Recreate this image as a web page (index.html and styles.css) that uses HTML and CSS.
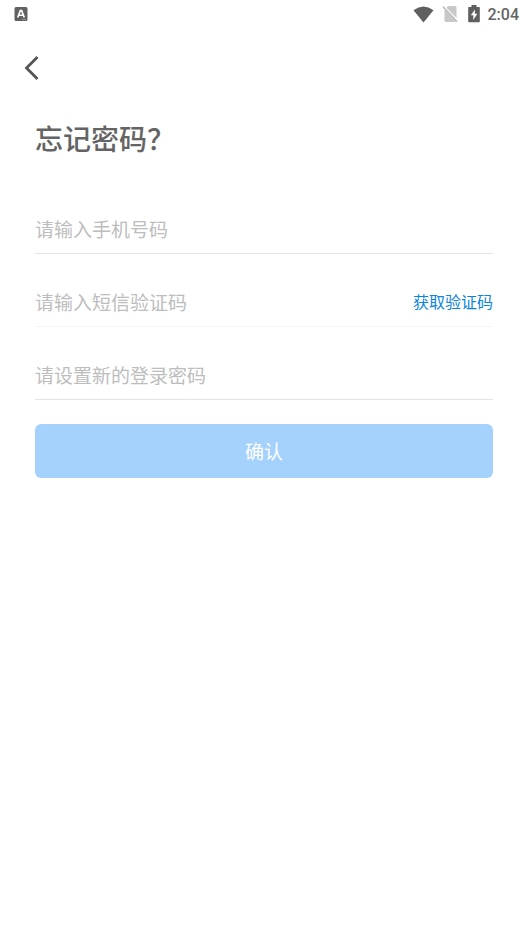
FILE: index.html
```html
<!DOCTYPE html>
<html lang="zh-CN">
<head>
<meta charset="utf-8">
<meta name="viewport" content="width=device-width, initial-scale=1">
<title>忘记密码</title>
<link rel="stylesheet" href="styles.css">
</head>
<body>
<header class="status-bar">
  <svg class="keyboard-icon" viewBox="0 0 14 14" aria-hidden="true">
    <rect width="13" height="14" x=".5" rx="1.5" fill="#626262"/>
    <path d="M3.700 10.500 6.300 3.600h1.400L10.300 10.500M4.700 8.300h4.600" fill="none" stroke="#fff" stroke-width="1.600"/>
    <path d="M8 12.600h4" stroke="#aaa" stroke-width=".7"/>
  </svg>
  <div class="status-group">
    <svg class="wifi-icon" viewBox="0 0 22 17" aria-hidden="true">
      <path d="M.5 4Q11-3.600 21.500 4L11 17Z" fill="#5f5f5f"/>
    </svg>
    <svg class="sim-icon" viewBox="0 0 18 18" aria-hidden="true">
      <path d="M6.200 1H13q1.500 0 1.500 1.500V13L4.300 2.700ZM2.500 4.200 14 16.400q-.4.600-1 .6H4q-1.500 0-1.500-1.500Z" fill="#c8c8c8"/>
      <path d="M.8 1.500 15.200 16.700" stroke="#b9b9b9" stroke-width="1.400"/>
    </svg>
    <svg class="battery-icon" viewBox="0 0 12 18" aria-hidden="true">
      <path d="M3.500 0h5v2H11q.8 0 .8.800v13.700q0 .8-.8.800H1q-.8 0-.8-.8V2.800Q.2 2 1 2h2.500Z" fill="#5f5f5f"/>
      <path d="M7 4.500 2.800 10.300h2.500V15l4-6.200H6.800Z" fill="#fff"/>
    </svg>
    <time class="clock">2:04</time>
  </div>
</header>
<nav class="nav-bar">
  <button class="back-button" type="button" aria-label="返回">
    <svg class="back-icon" viewBox="0 0 16 26" aria-hidden="true">
      <path d="M13.500 2 2.500 13l11 11" fill="none" stroke="#555" stroke-width="2.800"/>
    </svg>
  </button>
</nav>
<main class="content">
  <h1 class="title">忘记密码？</h1>
  <form class="form">
    <div class="field">
      <input class="field-input" type="tel" aria-label="手机号码" placeholder="请输入手机号码">
    </div>
    <div class="field field-light">
      <input class="field-input" type="text" aria-label="短信验证码" placeholder="请输入短信验证码">
      <button class="code-button" type="button">获取验证码</button>
    </div>
    <div class="field">
      <input class="field-input" type="password" aria-label="新的登录密码" placeholder="请设置新的登录密码">
    </div>
    <button class="submit-button" type="submit">确认</button>
  </form>
</main>
</body>
</html>
```

FILE: styles.css
```css
* {
  box-sizing: border-box;
}

body {
  margin: 0;
  background: #fff;
  color: #646464;
  font-family: "Noto Sans CJK SC", sans-serif;
}

button,
input {
  padding: 0;
  border: 0;
  background: none;
  font-family: inherit;
}

svg {
  display: block;
}

.status-bar {
  display: flex;
  align-items: center;
  justify-content: space-between;
  height: 28px;
  padding: 0 9px 0 14px;
}

.status-group {
  display: flex;
  align-items: center;
  gap: 8px;
}

.keyboard-icon {
  width: 14px;
  height: 14px;
}

.wifi-icon {
  width: 21px;
  height: 17px;
}

.sim-icon {
  width: 18px;
  height: 18px;
}

.battery-icon {
  width: 12px;
  height: 18px;
}

.clock {
  padding-top: 2px;
  font: 500 16px/20px Roboto, sans-serif;
}

.nav-bar {
  display: flex;
  padding: 16px 12px;
}

.back-button {
  display: grid;
  place-items: center;
  width: 40px;
  height: 48px;
}

.back-icon {
  width: 16px;
  height: 26px;
}

.content {
  padding: 8px 35px;
}

.title {
  margin: 0;
  font-size: 28px;
  font-weight: 500;
  line-height: 44px;
}

.form {
  display: flex;
  flex-direction: column;
  gap: 24px;
  padding-top: 45px;
}

.field {
  display: flex;
  align-items: center;
  border-bottom: 1px solid #e4e4e4;
}

.field-light {
  border-color: #f6f6f6;
}

.field-input {
  flex: 1;
  min-width: 0;
  height: 48px;
  padding-bottom: 2px;
  outline: 0;
  color: #646464;
  font-size: 19px;
  font-weight: 400;
}

.field-input::placeholder {
  color: #bdbdbd;
}

.code-button {
  padding-bottom: 2px;
  color: #0c84e0;
  font-size: 16px;
  line-height: 24px;
}

.submit-button {
  height: 54px;
  padding-bottom: 2px;
  border-radius: 6px;
  background: #a5d1fd;
  color: #fff;
  font-size: 19px;
}
```
